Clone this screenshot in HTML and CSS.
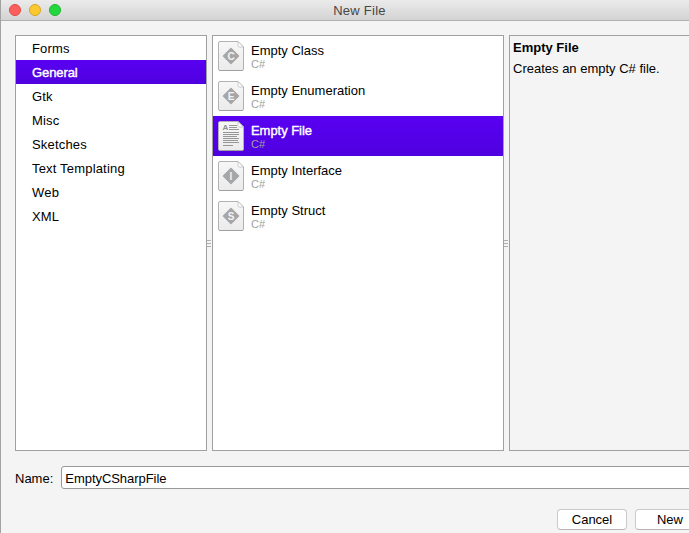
FILE: index.html
```html
<!DOCTYPE html>
<html lang="en">
<head>
<meta charset="utf-8">
<title>New File</title>
<link rel="stylesheet" href="styles.css">
</head>
<body>
<svg class="defs" width="0" height="0" aria-hidden="true">
  <defs>
    <linearGradient id="paper" x1="0" y1="0" x2="0" y2="1">
      <stop offset="0" stop-color="#f7f7f7"/><stop offset="1" stop-color="#ebebeb"/>
    </linearGradient>
    <g id="sheet">
      <path d="M2 .5H20L25.5 6V28Q25.500 29.500 24 29.500H2Q.5 29.500 .5 28V2Q.5 .5 2 .5Z" fill="url(#paper)" stroke="#b2b2b2"/>
      <path d="M1.500 29.500H24.500" stroke="#a0a0a0" fill="none"/>
      <path d="M20 .5V4.500Q20 6 21.500 6H25.500Z" fill="#fff" stroke="#bcbcbc" stroke-width=".8"/>
    </g>
    <path id="diamond" d="M13 7.500L20.500 15L13 22.500L5.500 15Z" fill="#a6a6a6" stroke="#a6a6a6" stroke-width="1.500" stroke-linejoin="round"/>
  </defs>
</svg>
<div class="window">
  <header class="titlebar">
    <div class="lights"><i class="light close"></i><i class="light minimise"></i><i class="light expand"></i></div>
    <h1 class="title">New File</h1>
  </header>
  <main class="panes">
    <ul class="pane categories">
      <li>Forms</li>
      <li class="selected">General</li>
      <li>Gtk</li>
      <li>Misc</li>
      <li>Sketches</li>
      <li>Text Templating</li>
      <li>Web</li>
      <li>XML</li>
    </ul>
    <div class="splitter"><i></i><i></i><i></i></div>
    <ul class="pane templates">
      <li><svg class="icon" viewBox="0 0 26 30"><use href="#sheet"/><use href="#diamond"/><text class="letter" x="13" y="18.500">C</text></svg><div><p class="name">Empty Class</p><p class="lang">C#</p></div></li>
      <li><svg class="icon" viewBox="0 0 26 30"><use href="#sheet"/><use href="#diamond"/><text class="letter" x="13" y="18.500">E</text></svg><div><p class="name">Empty Enumeration</p><p class="lang">C#</p></div></li>
      <li class="selected"><svg class="icon" viewBox="0 0 26 30"><use href="#sheet"/><text class="mark" x="4.500" y="9">A</text><path d="M11 4.500H19M11 6.500H19M11 8.500H21M5 11.500H21M5 13.500H21M5 15.500H19M5 17.500H21M5 19.500H20M5 21.500H21M5 24.500H15" stroke="#8c8c8c" stroke-width=".9"/></svg><div><p class="name">Empty File</p><p class="lang">C#</p></div></li>
      <li><svg class="icon" viewBox="0 0 26 30"><use href="#sheet"/><use href="#diamond"/><text class="letter" x="13" y="18.500">I</text></svg><div><p class="name">Empty Interface</p><p class="lang">C#</p></div></li>
      <li><svg class="icon" viewBox="0 0 26 30"><use href="#sheet"/><use href="#diamond"/><text class="letter" x="13" y="18.500">S</text></svg><div><p class="name">Empty Struct</p><p class="lang">C#</p></div></li>
    </ul>
    <div class="splitter"><i></i><i></i><i></i></div>
    <section class="pane details">
      <h2>Empty File</h2>
      <p>Creates an empty C# file.</p>
    </section>
  </main>
  <div class="field">
    <label for="name">Name:</label>
    <input id="name" type="text" value="EmptyCSharpFile">
  </div>
  <footer class="actions">
    <button>Cancel</button>
    <button>New</button>
  </footer>
</div>
</body>
</html>
```
FILE: styles.css
```css
* { box-sizing: border-box; }
body, ul, h1, h2, p { margin: 0; padding: 0; }
body {
  overflow: hidden;
  font: 13px/16px "Liberation Sans", Arial, sans-serif;
  color: #000;
}
ul { list-style: none; }
.defs { display: block; }
.window {
  width: 718px;
  height: 533px;
  background: #f4f4f4;
  border-left: 1px solid #a2a2a2;
  overflow: hidden;
}
.titlebar {
  display: grid;
  grid-template-columns: 80px 1fr 80px;
  align-items: center;
  height: 21px;
  background: linear-gradient(#ebebeb, #d3d3d3);
  border-bottom: 1px solid #b1b1b1;
}
.lights { display: flex; gap: 8px; padding-left: 8px; }
.light { width: 12px; height: 12px; border-radius: 50%; border: 1px solid; }
.close { background: #fc605c; border-color: #e14944; }
.minimise { background: #fac92f; border-color: #dba423; }
.expand { background: #22d83c; border-color: #1bb52d; }
.title {
  padding-top: 2px;
  font-size: 13px;
  font-weight: 400;
  letter-spacing: .25px;
  color: #464646;
  text-align: center;
}
.panes { display: flex; height: 416px; margin: 14px 14px 0; }
.pane { border: 1px solid #a0a0a0; background: #fff; }
.categories { width: 192px; }
.categories li { height: 24px; padding: 5px 0 3px 16px; letter-spacing: .18px; }
.categories .selected { letter-spacing: -.1px; }
.selected {
  background: linear-gradient(#5900f2, #4f00df);
  color: #fff;
  -webkit-text-stroke: .4px;
}
.splitter {
  width: 5px;
  display: flex;
  flex-direction: column;
  justify-content: center;
  gap: 2px;
}
.splitter i { width: 4px; height: 1px; background: #b0b0b0; }
.templates { width: 292px; }
.templates li { display: flex; gap: 7px; height: 40px; padding: 4px 0 0 5px; }
.icon { width: 26px; height: 30px; margin-top: 1px; flex: none; }
.letter { font: bold 10px "Liberation Sans", sans-serif; text-anchor: middle; fill: #f3f3f3; -webkit-text-stroke: 0; }
.mark { font: bold 8px "Liberation Sans", sans-serif; fill: #8c8c8c; -webkit-text-stroke: 0; }
.name { padding-top: 3px; }
.selected .name { letter-spacing: -.05px; }
.lang { font-size: 11px; line-height: 11px; color: #a0a0a0; -webkit-text-stroke: 0; }
.details { flex: 1; background: #f4f4f4; padding: 4px 3px; }
.details h2 { font-size: 13px; line-height: 16px; }
.details p { margin-top: 5px; }
.field { display: flex; align-items: center; gap: 8px; height: 23px; margin: 15px 14px 0; }
.field label { padding-top: 2px; }
.field input {
  flex: 1;
  height: 23px;
  padding: 2px 3px 0;
  font: inherit;
  letter-spacing: -.05px;
  color: #000;
  border: 1px solid #999;
  border-radius: 3px;
  background: #fff;
  outline: 0;
}
.actions { display: flex; justify-content: flex-end; gap: 8px; margin: 20px 13px 0; }
.actions button {
  width: 70px;
  height: 21px;
  padding: 0;
  font: inherit;
  color: #000;
  background: #fff;
  border: 1px solid #cacaca;
  border-bottom-color: #b5b5b5;
  border-radius: 4px;
}
```
